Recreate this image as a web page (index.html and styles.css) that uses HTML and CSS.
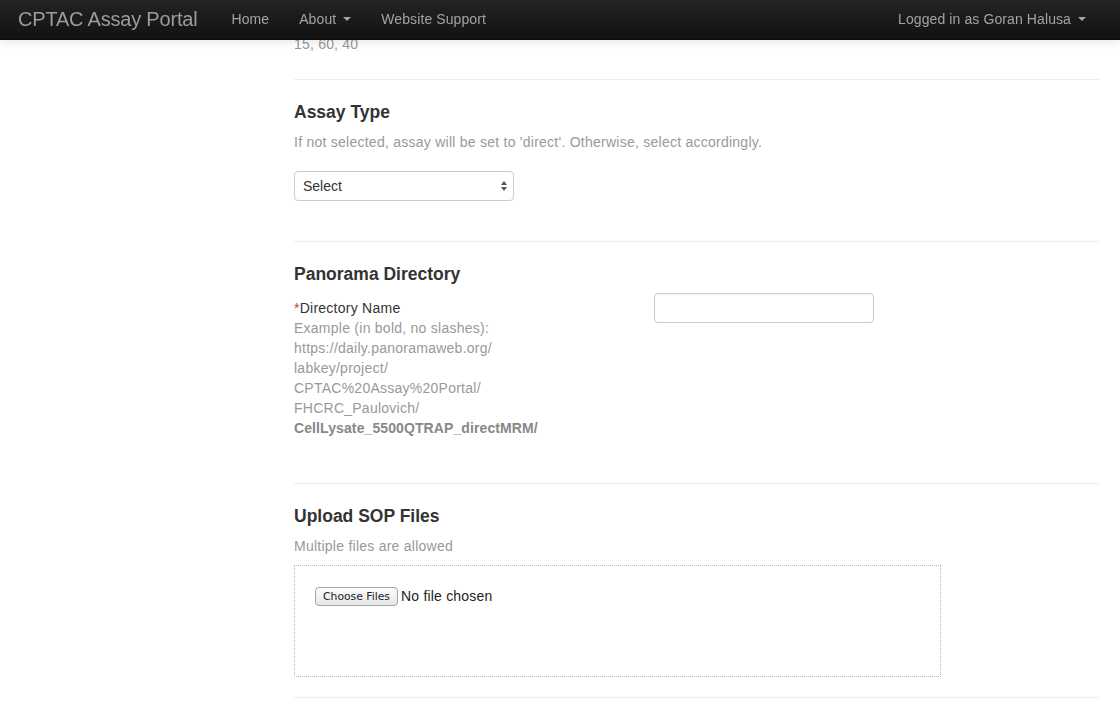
FILE: index.html
```html
<!DOCTYPE html>
<html>
<head>
<meta charset="utf-8">
<title>CPTAC Assay Portal</title>
<link rel="stylesheet" href="styles.css">
</head>
<body>
<header class="navbar">
  <div class="nav-left">
    <a class="brand" href="#">CPTAC Assay Portal</a>
    <nav class="nav">
      <a href="#">Home</a>
      <a href="#">About <span class="caret"></span></a>
      <a href="#">Website Support</a>
    </nav>
  </div>
  <a class="user" href="#">Logged in as Goran Halusa <span class="caret"></span></a>
</header>

<main class="content">
  <div class="prev-value">15, 60, 40</div>
  <hr class="divider">

  <section class="section assay">
    <h4 class="section-title">Assay Type</h4>
    <p class="help">If not selected, assay will be set to 'direct'. Otherwise, select accordingly.</p>
    <div class="select-wrap">
      <select class="select"><option>Select</option></select>
      <svg class="select-arrows" width="8" height="12" viewBox="0 0 8 12"><path d="M4 1 L7 5 L1 5 Z" fill="#555"/><path d="M4 11 L7 7 L1 7 Z" fill="#555"/></svg>
    </div>
  </section>
  <hr class="divider">

  <section class="section panorama">
    <h4 class="section-title">Panorama Directory</h4>
    <div class="field-row">
      <div class="field-label">
        <div class="label"><span class="req">*</span>Directory Name</div>
        <div class="help-line">Example (in bold, no slashes):</div>
        <div class="help-line">https://daily.panoramaweb.org/</div>
        <div class="help-line">labkey/project/</div>
        <div class="help-line">CPTAC%20Assay%20Portal/</div>
        <div class="help-line">FHCRC_Paulovich/</div>
        <div class="help-line"><strong>CellLysate_5500QTRAP_directMRM/</strong></div>
      </div>
      <div class="field-input">
        <input class="text-input" type="text">
      </div>
    </div>
  </section>
  <hr class="divider">

  <section class="section upload">
    <h4 class="section-title">Upload SOP Files</h4>
    <p class="help">Multiple files are allowed</p>
    <div class="dropzone">
      <div class="file-picker">
        <button class="file-btn" type="button">Choose Files</button>
        <span class="file-status">No file chosen</span>
      </div>
    </div>
  </section>
  <hr class="divider last">
</main>
</body>
</html>
```

FILE: styles.css
```css
* { box-sizing: border-box; }

html, body {
  margin: 0;
  padding: 0;
  background: #fff;
}

body {
  font-family: "Liberation Sans", Arial, sans-serif;
  font-size: 14px;
  line-height: 20px;
  color: #333;
}

a { text-decoration: none; }

.navbar {
  position: fixed;
  top: 0;
  left: 0;
  right: 0;
  height: 40px;
  z-index: 10;
  display: flex;
  align-items: center;
  justify-content: space-between;
  background: linear-gradient(to bottom, #232323, #121212);
  border-bottom: 1px solid #0c0c0c;
  box-shadow: 0 1px 10px rgba(0, 0, 0, 0.12);
  padding: 0 20px 2px 18px;
}

.nav-left {
  display: flex;
  align-items: center;
}

.brand {
  font-size: 20px;
  font-weight: 300;
  color: #9c9c9c;
  letter-spacing: -0.2px;
  margin-right: 34px;
}

.nav {
  display: flex;
  gap: 30px;
}

.nav a, .user {
  color: #a3a3a3;
  font-size: 14px;
  letter-spacing: 0.1px;
}

.caret {
  display: inline-block;
  width: 0;
  height: 0;
  vertical-align: middle;
  margin-left: 3px;
  margin-top: -2px;
  border-top: 4px solid #a3a3a3;
  border-left: 4px solid transparent;
  border-right: 4px solid transparent;
}

.user { margin-right: 14px; }

.content {
  width: 806px;
  margin-left: 294px;
  padding-top: 34px;
}

.prev-value {
  color: #999;
  letter-spacing: 0.2px;
}

.divider {
  border: 0;
  border-top: 1px solid #eee;
  border-bottom: 1px solid #fff;
  margin: 25px 0 0;
  height: 0;
}

.section-title {
  font-size: 17.5px;
  font-weight: bold;
  color: #333;
  line-height: 20px;
  margin: 0 0 10px;
}

.assay { padding: 21px 0 0; }
.assay .select-wrap { margin-top: 19px; margin-bottom: 40px; }

.help {
  margin: 0;
  color: #999;
  letter-spacing: 0.25px;
}

.select-wrap {
  position: relative;
  width: 220px;
  height: 30px;
}

.select {
  appearance: none;
  -webkit-appearance: none;
  width: 220px;
  height: 30px;
  border: 1px solid #ccc;
  border-radius: 4px;
  background: #fff;
  font-family: "Liberation Sans", Arial, sans-serif;
  font-size: 14px;
  color: #333;
  padding: 0 8px;
}

.select-arrows {
  position: absolute;
  right: 6px;
  top: 9px;
}

.panorama { padding: 21px 0 0; }

.field-row {
  display: grid;
  grid-template-columns: 360px 220px;
  margin-top: 14px;
  margin-bottom: 45px;
}

.field-label { letter-spacing: 0.25px; }
.field-label .label { color: #333; }
.req { color: #b94a48; }
.help-line { color: #999; }
.help-line strong { color: #888; letter-spacing: 0.1px; }

.field-input { margin-top: -5px; }

.text-input {
  width: 220px;
  height: 30px;
  border: 1px solid #ccc;
  border-radius: 4px;
  box-shadow: inset 0 1px 1px rgba(0, 0, 0, 0.05);
}

.upload { padding: 21px 0 0; }

.upload .help { margin-bottom: 9px; }

.dropzone {
  width: 647px;
  height: 112px;
  border: 1px dotted #bbb;
  padding: 20px 20px;
}

.file-picker {
  display: flex;
  align-items: center;
  gap: 3px;
}

.file-btn {
  font-family: "DejaVu Sans", sans-serif;
  font-size: 10.8px;
  color: #222;
  height: 19px;
  padding: 1px 7px 0;
  border: 1px solid #a5a5a5;
  border-radius: 4px;
  background: linear-gradient(to bottom, #fdfdfd, #e6e6e6);
}

.file-status {
  font-size: 14px;
  color: #222;
  letter-spacing: 0.2px;
}

.divider.last { margin-top: 20px; }
```
